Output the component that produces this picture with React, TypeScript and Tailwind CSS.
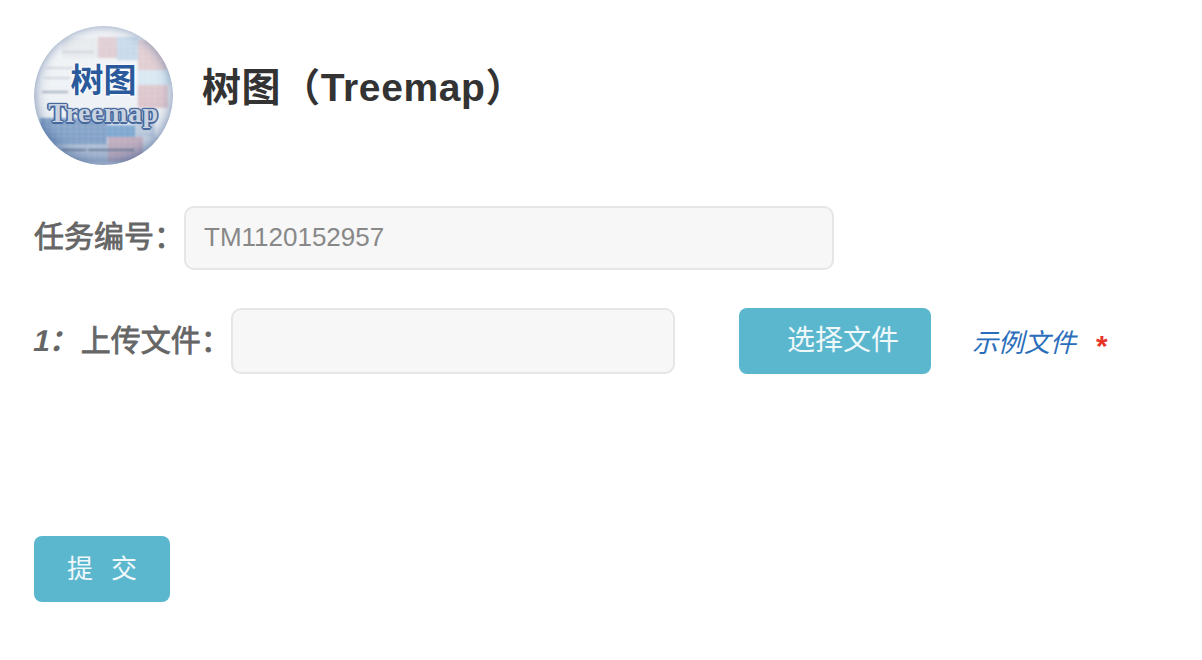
import React from 'react';

const fontStack = "font-['Liberation_Sans','Noto_Sans_CJK_SC',sans-serif]";

const TreemapLogo: React.FC = () => (
  <div className="relative w-[139px] h-[139px] shrink-0 rounded-full overflow-hidden bg-[#eef1f5]">
    {/* blurred treemap tiles behind the label */}
    <svg viewBox="0 0 139 139" className="w-full h-full blur-[0.8px]">
      <defs>
        <pattern id="cells" width="6" height="5" patternUnits="userSpaceOnUse">
          <path d="M0 0H6M0 0V5" stroke="#ffffff" strokeOpacity="0.28" strokeWidth="1" fill="none" />
        </pattern>
        <linearGradient id="sphere" x1="0" y1="0" x2="0" y2="1">
          <stop offset="0" stopColor="#ffffff" stopOpacity="0.25" />
          <stop offset="0.55" stopColor="#ffffff" stopOpacity="0" />
          <stop offset="1" stopColor="#3f6aa5" stopOpacity="0.25" />
        </linearGradient>
      </defs>
      <rect width="139" height="139" fill="#eef1f5" />
      <rect x="28" y="12" width="36" height="20" fill="#e3e6ea" />
      <rect x="64" y="11" width="19" height="21" fill="#d9c3cb" />
      <rect x="83" y="11" width="21" height="23" fill="#bcd2e6" />
      <rect x="104" y="14" width="29" height="30" fill="#dcc6cc" />
      <rect x="104" y="44" width="32" height="15" fill="#d5e6f1" />
      <rect x="104" y="59" width="30" height="23" fill="#dcc4cb" />
      <rect x="6" y="92" width="67" height="26" fill="#7f9fc6" />
      <rect x="73" y="99" width="28" height="12" fill="#79a4cf" />
      <rect x="101" y="92" width="20" height="19" fill="#bccbdd" />
      <rect x="74" y="111" width="35" height="25" fill="#c9aebc" />
      <rect x="109" y="111" width="20" height="18" fill="#d3dbe6" />
      <rect x="20" y="118" width="54" height="18" fill="#b9c7da" />
      <rect width="139" height="139" fill="url(#cells)" />
      <path d="M28 26H60M12 42H40M10 52H36" stroke="#c3cad3" strokeWidth="1.5" />
      <path d="M8 66H34" stroke="#8e98a8" strokeWidth="1.5" />
      <path d="M28 124H52M54 124H100" stroke="#53647f" strokeWidth="1.5" />
      <rect width="139" height="139" fill="url(#sphere)" />
    </svg>
    <div className="absolute inset-0 rounded-full shadow-[inset_0_-3px_14px_rgba(50,85,140,0.45),inset_0_0_8px_rgba(70,100,150,0.3)]" />
    <span className="absolute left-0 right-0 top-[36px] text-center text-[33px] leading-[33px] font-bold text-[#2a5a9c] font-['Noto_Sans_CJK_SC',sans-serif] [text-shadow:0_0_3px_#ffffff,0_0_3px_#ffffff,0_0_2px_#ffffff]">
      树图
    </span>
    <span className="absolute left-0 right-0 top-[72px] text-center text-[28px] leading-[30px] font-bold text-[#c9d2e0] font-['Liberation_Serif',serif] tracking-[0.6px] [text-shadow:1.5px_0_0_#46689c,-1.5px_0_0_#46689c,0_1.5px_0_#46689c,0_-1.5px_0_#46689c,1px_1px_1px_#46689c,-1px_-1px_1px_#46689c,1px_-1px_1px_#46689c,-1px_1px_1px_#46689c]">
      Treemap
    </span>
  </div>
);

export default function App() {
  return (
    <div className={`min-h-screen bg-white pl-[34px] pt-[26px] ${fontStack}`}>
      {/* Header */}
      <div className="flex items-center gap-[29px] h-[139px]">
        <TreemapLogo />
        <h1 className="text-[39px] leading-[44px] font-bold text-[#333333] tracking-[0.6px] -mt-[16px]">树图（Treemap）</h1>
      </div>

      {/* Task number */}
      <div className="flex items-center mt-[41px]">
        <label className="w-[150px] text-[30px] leading-[40px] text-[#666666] [-webkit-text-stroke:0.8px_#666666] -mt-[2px]">任务编号：</label>
        <input
          readOnly
          value="TM1120152957"
          className="w-[650px] h-[64px] pl-[18px] pr-[19px] pb-[2px] text-[26px] text-[#888888] bg-[#f7f7f7] border-2 border-[#e6e6e6] rounded-[10px] outline-none"
        />
      </div>

      {/* Upload row */}
      <div className="flex items-center mt-[38px]">
        <label className="w-[197px] text-[30px] leading-[40px] text-[#666666] [-webkit-text-stroke:0.8px_#666666]">
          <span className="inline-block font-bold -skew-x-[12deg] [-webkit-text-stroke:0]">1：</span>上传文件：
        </label>
        <input
          readOnly
          className="w-[444px] h-[66px] px-[19px] text-[26px] bg-[#f7f7f7] border-2 border-[#e6e6e6] rounded-[10px] outline-none"
        />
        <button className="ml-[64px] w-[192px] h-[66px] pl-[48px] pr-[32px] text-left whitespace-nowrap text-[28px] leading-[62px] text-white/90 bg-[#5bb7ce] rounded-[8px]">
          选择文件
        </button>
        <a className="ml-[41px] text-[26px] italic text-[#2a6ebb] mt-[4px]">示例文件</a>
        <span className="ml-[20px] text-[30px] font-bold text-[#e8372a] mt-[8px]">*</span>
      </div>

      {/* Submit */}
      <button className="mt-[162px] w-[136px] h-[66px] flex items-center justify-center gap-[18px] text-[26px] text-white/90 bg-[#5bb7ce] rounded-[8px]">
        <span>提</span>
        <span>交</span>
      </button>
    </div>
  );
}
